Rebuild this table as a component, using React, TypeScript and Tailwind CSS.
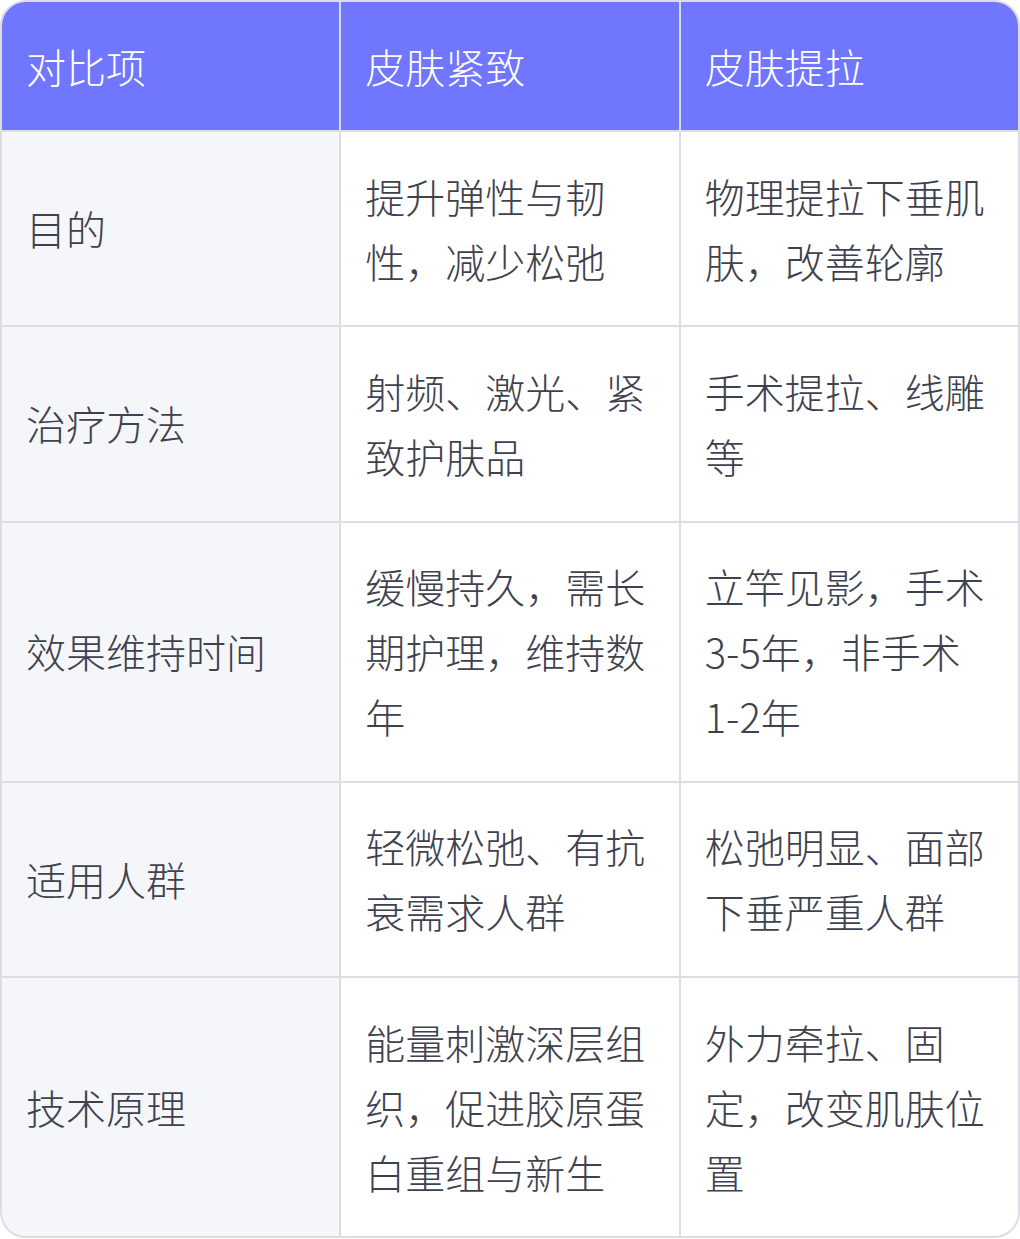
import React from 'react';

const headers = ['对比项', '皮肤紧致', '皮肤提拉'];

const rows: [string, string, string][] = [
  ['目的', '提升弹性与韧性，减少松弛', '物理提拉下垂肌肤，改善轮廓'],
  ['治疗方法', '射频、激光、紧致护肤品', '手术提拉、线雕等'],
  ['效果维持时间', '缓慢持久，需长期护理，维持数年', '立竿见影，手术3-5年，非手术1-2年'],
  ['适用人群', '轻微松弛、有抗衰需求人群', '松弛明显、面部下垂严重人群'],
  ['技术原理', '能量刺激深层组织，促进胶原蛋白重组与新生', '外力牵拉、固定，改变肌肤位置'],
];

export default function App() {
  return (
    <div
      className="w-[1020px] bg-white"
      style={{ fontFamily: '"Noto Sans CJK SC", "Noto Sans", sans-serif' }}
    >
      <div className="border-2 border-[#dcdde3] rounded-[26px] overflow-hidden">
        <div className="grid grid-cols-3 gap-[2px] bg-[#dcdde3]">
          {headers.map((h) => (
            <div
              key={h}
              className="bg-[#7176fe] text-white px-6 py-[31.6px] text-[40px] leading-[65px] font-light"
            >
              {h}
            </div>
          ))}
          {rows.map((r) => (
            <React.Fragment key={r[0]}>
              <div className="bg-[#f5f6fa] text-[#3e414e] px-6 py-[31.6px] text-[40px] leading-[65px] font-light flex items-center">
                {r[0]}
              </div>
              <div className="bg-white text-[#3e414e] px-6 py-[31.6px] text-[40px] leading-[65px] font-light">
                {r[1]}
              </div>
              <div className="bg-white text-[#3e414e] px-6 py-[31.6px] text-[40px] leading-[65px] font-light">
                {r[2]}
              </div>
            </React.Fragment>
          ))}
        </div>
      </div>
    </div>
  );
}
